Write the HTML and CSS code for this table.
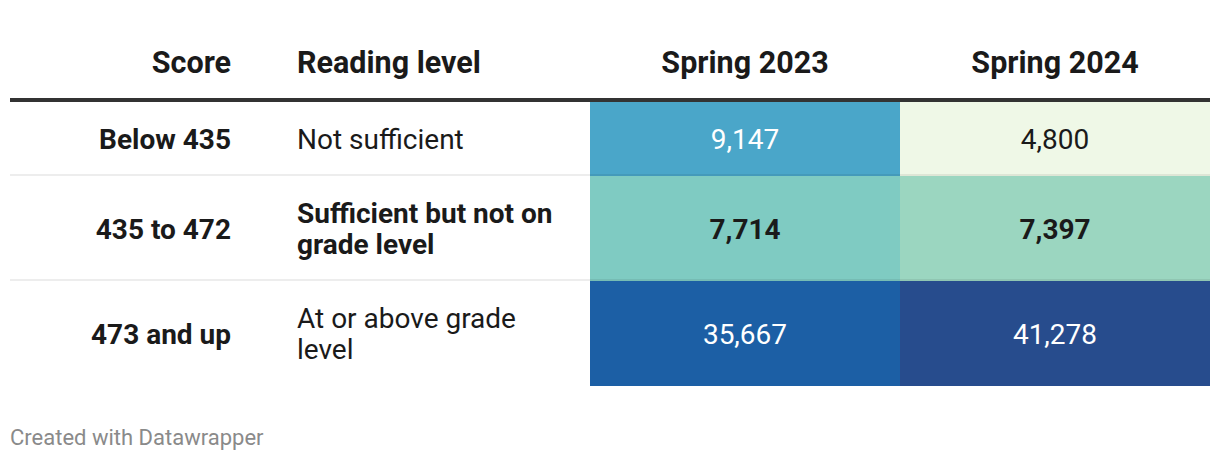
FILE: index.html
```html
<!DOCTYPE html>
<html lang="en">
<head>
<meta charset="utf-8">
<title>Reading levels</title>
<link rel="stylesheet" href="styles.css">
</head>
<body>
<div class="chart">
  <div class="row head">
    <div class="cell score">Score</div>
    <div class="cell level">Reading level</div>
    <div class="cell num">Spring 2023</div>
    <div class="cell num">Spring 2024</div>
  </div>
  <div class="row body r1">
    <div class="cell score">Below 435</div>
    <div class="cell level">Not sufficient</div>
    <div class="cell num c-a dark">9,147</div>
    <div class="cell num c-b">4,800</div>
  </div>
  <div class="row body r2 bold">
    <div class="cell score">435 to 472</div>
    <div class="cell level">Sufficient but not on grade level</div>
    <div class="cell num c-c">7,714</div>
    <div class="cell num c-d">7,397</div>
  </div>
  <div class="row body r3 last">
    <div class="cell score">473 and up</div>
    <div class="cell level">At or above grade level</div>
    <div class="cell num c-e dark">35,667</div>
    <div class="cell num c-f dark">41,278</div>
  </div>
  <div class="footer">Created with Datawrapper</div>
</div>
</body>
</html>
```

FILE: styles.css
```css
html, body {
  margin: 0;
  padding: 0;
  background: #ffffff;
}

body {
  font-family: Roboto, "Liberation Sans", Arial, sans-serif;
  color: #1a1a1a;
}

.chart {
  padding: 0 10px;
}

.row {
  display: grid;
  grid-template-columns: 254px 326px 310px 310px;
}

.head {
  padding-top: 46px;
  border-bottom: 4px solid #333333;
  font-size: 30.5px;
  font-weight: 700;
  line-height: 34px;
}

.head .cell {
  padding-bottom: 18px;
}

.body {
  font-size: 28px;
  line-height: 31px;
}

.body .cell {
  display: flex;
  align-items: center;
  padding-top: 22px;
  padding-bottom: 19px;
  border-bottom: 2px solid rgba(0, 0, 0, 0.07);
}

.body.last .cell {
  border-bottom: 0;
  padding-bottom: 21px;
}

.cell.score {
  justify-content: flex-end;
  text-align: right;
  padding-right: 33px;
  font-weight: 700;
}

.cell.level {
  padding-left: 33px;
  padding-right: 30px;
}

.cell.num {
  justify-content: center;
  text-align: center;
}

.bold .cell {
  font-weight: 700;
}

.c-a { background: #4aa6c9; }
.c-b { background: #eff8e7; }
.c-c { background: #7fcbc2; }
.c-d { background: #9bd6c0; }
.c-e { background: #1c5fa5; }
.c-f { background: #274c8d; }

.dark { color: #ffffff; }

.footer {
  margin-top: 39px;
  font-size: 22px;
  line-height: 26px;
  color: #8a8a8a;
}
```
